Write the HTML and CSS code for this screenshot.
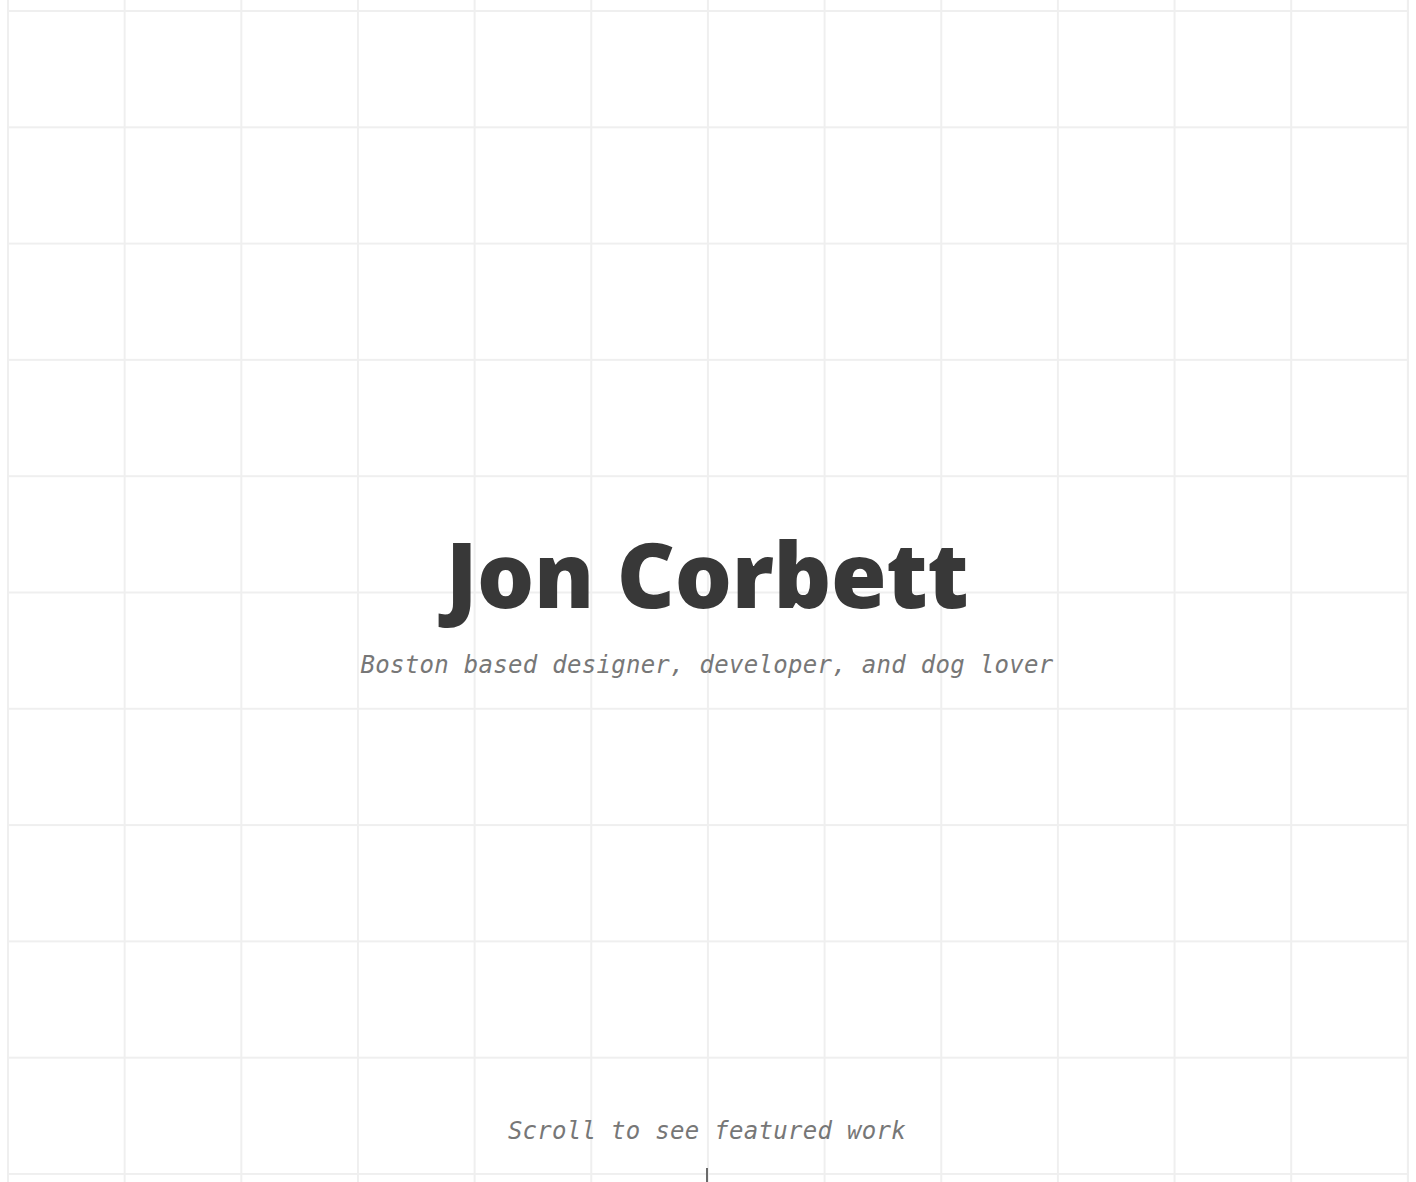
FILE: index.html
```html
<!DOCTYPE html>
<html lang="en">
<head>
<meta charset="utf-8">
<title>Jon Corbett</title>
<link rel="stylesheet" href="styles.css">
</head>
<body>
<main class="hero">
  <section class="intro">
    <h1 class="name">Jon Corbett</h1>
    <p class="tagline">Boston based designer, developer, and dog lover</p>
  </section>
  <div class="scroll-hint">
    <p class="scroll-text">Scroll to see featured work</p>
    <span class="scroll-line"></span>
  </div>
</main>
</body>
</html>
```

FILE: styles.css
```css
html, body {
  margin: 0;
  padding: 0;
  background: #ffffff;
}

.hero {
  height: 100vh;
  margin: 0 7px;
  box-sizing: border-box;
  display: flex;
  flex-direction: column;
  overflow: hidden;
  border-right: 2px solid #efefef;
  background-color: #ffffff;
  background-image:
    linear-gradient(to right, #efefef 0, #efefef 2px, transparent 2px),
    linear-gradient(to bottom, #efefef 0, #efefef 2px, transparent 2px);
  background-size: calc(100% / 12) 116.3px;
  background-position: 0 10px;
}

.intro {
  flex: 1;
  display: flex;
  flex-direction: column;
  align-items: center;
  justify-content: center;
  padding-top: 88px;
}

.name {
  margin: 0;
  font-family: "Open Sans", sans-serif;
  font-weight: 800;
  font-size: 90px;
  line-height: 1.2;
  color: #383838;
  letter-spacing: -0.4px;
}

.tagline {
  margin: 20px 0 0;
  font-family: "DejaVu Sans Mono", monospace;
  font-style: italic;
  font-size: 24px;
  letter-spacing: 0.3px;
  line-height: 1.5;
  color: #777777;
}

.scroll-hint {
  display: flex;
  flex-direction: column;
  align-items: center;
}

.scroll-text {
  margin: 0;
  font-family: "DejaVu Sans Mono", monospace;
  font-style: italic;
  font-size: 24px;
  letter-spacing: 0.3px;
  line-height: 36px;
  color: #777777;
}

.scroll-line {
  display: block;
  width: 2px;
  height: 14px;
  margin-top: 19px;
  background: #6a6a6a;
}
```
